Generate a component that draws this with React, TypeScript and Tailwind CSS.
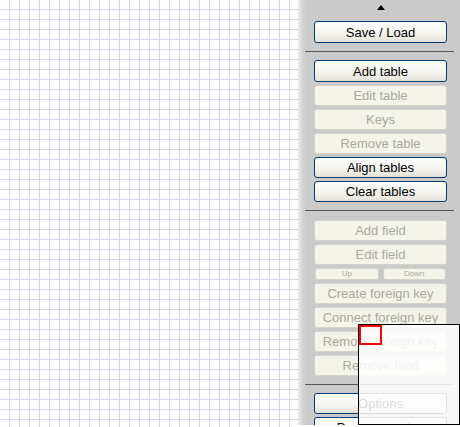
import React from "react";

const font = { fontFamily: '"Liberation Sans", Arial, sans-serif' };

function Btn({ label, enabled = false, small = false, className = "" }: { label: string; enabled?: boolean; small?: boolean; className?: string }) {
  const base = "flex shrink-0 items-center justify-center rounded-[3px] border leading-none whitespace-nowrap overflow-hidden";
  const size = small ? "h-[12px] text-[8px]" : "h-[21px] text-[13px]";
  const look = enabled
    ? "border-[#003c74] bg-[linear-gradient(to_bottom,#ffffff_0%,#f4f3ee_60%,#e3e1d6_100%)] text-black"
    : "border-[#d6d4c6] bg-[#f5f4ea] text-[#aca899]";
  return <div className={`${base} ${size} ${look} ${className}`}>{label}</div>;
}

function Sep({ className = "" }: { className?: string }) {
  return <div className={`ml-[7px] mr-[6px] h-px shrink-0 bg-[#555555] ${className}`} />;
}

export default function App() {
  return (
    <div className="relative flex h-[427px] w-[460px] overflow-hidden bg-white" style={font}>
      <div className="h-full flex-1 bg-white bg-[linear-gradient(to_right,transparent_9px,#d4d4f2_9px),linear-gradient(to_bottom,transparent_9px,#d4d4f2_9px)] bg-[size:10px_10px]" />
      <div className="flex h-[425px] w-[162px] shrink-0 flex-col overflow-hidden bg-[linear-gradient(to_right,#ececec_0px,#d0d0d0_5px,#cacaca_8px,#cacaca_100%)]">
        <div className="mt-[5px] flex shrink-0 justify-center pl-[4px]">
          <div className="h-0 w-0 border-x-[4.5px] border-b-[5px] border-x-transparent border-b-black" />
        </div>
        <div className="ml-[16px] mr-[13px] mt-[11px] flex shrink-0 flex-col">
          <Btn label="Save / Load" enabled className="h-[22px]" />
        </div>
        <Sep className="mt-[8px]" />
        <div className="ml-[16px] mr-[13px] mt-[8px] flex shrink-0 flex-col gap-[3px]">
          <Btn label="Add table" enabled className="h-[22px]" />
          <Btn label="Edit table" />
          <Btn label="Keys" />
          <Btn label="Remove table" />
          <Btn label="Align tables" enabled />
          <Btn label="Clear tables" enabled />
        </div>
        <Sep className="mt-[8px]" />
        <div className="ml-[16px] mr-[13px] mt-[9px] flex shrink-0 flex-col gap-[3px]">
          <Btn label="Add field" />
          <Btn label="Edit field" />
          <div className="flex shrink-0 gap-[4px] px-[1px]">
            <Btn label="Up" small className="flex-1" />
            <Btn label="Down" small className="flex-1" />
          </div>
          <Btn label="Create foreign key" />
          <Btn label="Connect foreign key" />
          <Btn label="Remove foreign key" />
          <Btn label="Remove field" />
        </div>
        <Sep className="mt-[8px]" />
        <div className="ml-[16px] mr-[13px] mt-[8px] flex shrink-0 flex-col gap-[3px]">
          <Btn label="Options" enabled />
          <Btn label="Documentation" enabled />
        </div>
      </div>
      <div className="absolute left-[358px] top-[324px] h-[101px] w-[102px] border border-black bg-white/85">
        <div className="h-[20px] w-[23px] border-2 border-[#ff0000]" />
      </div>
    </div>
  );
}
